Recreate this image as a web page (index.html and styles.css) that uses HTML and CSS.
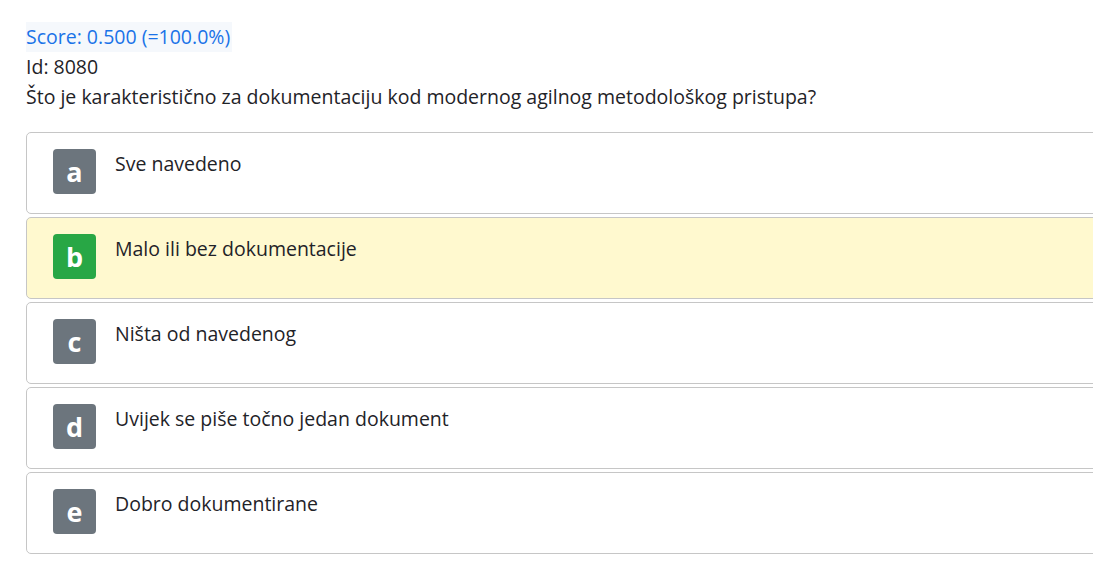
FILE: index.html
```html
<!DOCTYPE html>
<html lang="hr">
<head>
<meta charset="utf-8">
<link rel="stylesheet" href="styles.css">
</head>
<body>
<main class="page">
  <div class="score">Score: 0.500 (=100.0%)</div>
  <div class="line">Id: 8080</div>
  <div class="line">Što je karakteristično za dokumentaciju kod modernog agilnog metodološkog pristupa?</div>
  <div class="answers">
    <div class="card"><span class="badge">a</span><span class="text">Sve navedeno</span></div>
    <div class="card card-correct"><span class="badge badge-correct">b</span><span class="text">Malo ili bez dokumentacije</span></div>
    <div class="card"><span class="badge">c</span><span class="text">Ništa od navedenog</span></div>
    <div class="card"><span class="badge">d</span><span class="text">Uvijek se piše točno jedan dokument</span></div>
    <div class="card"><span class="badge">e</span><span class="text">Dobro dokumentirane</span></div>
  </div>
</main>
</body>
</html>
```
FILE: styles.css
```css
html, body {
  margin: 0;
  padding: 0;
  background: #ffffff;
}
body {
  font-family: "Open Sans", "Noto Sans", sans-serif;
  font-size: 19.5px;
  color: #1f2328;
  overflow: hidden;
}
.page {
  padding: 22px 0 0 26px;
}
.score {
  display: inline-block;
  color: #1a73e8;
  background: #f5f8fc;
  line-height: 30px;
  padding-right: 2px;
}
.line {
  line-height: 30px;
}
.answers {
  margin-top: 20px;
  display: flex;
  flex-direction: column;
  gap: 3px;
  width: 1120px;
}
.card {
  display: flex;
  align-items: flex-start;
  gap: 19px;
  height: 80px;
  box-sizing: content-box;
  border: 1px solid #c6c6c6;
  border-radius: 5px;
  padding: 0 0 0 26px;
  background: #ffffff;
}
.card-correct {
  background: #fff9cf;
}
.badge {
  margin-top: 16px;
  width: 43px;
  height: 45px;
  border-radius: 4px;
  background: #6c757d;
  color: #ffffff;
  font-weight: 700;
  font-size: 27px;
  display: flex;
  align-items: center;
  justify-content: center;
  line-height: 1;
}
.badge-correct {
  background: #28a745;
}
.text {
  margin-top: 16px;
  line-height: 30px;
}
```
